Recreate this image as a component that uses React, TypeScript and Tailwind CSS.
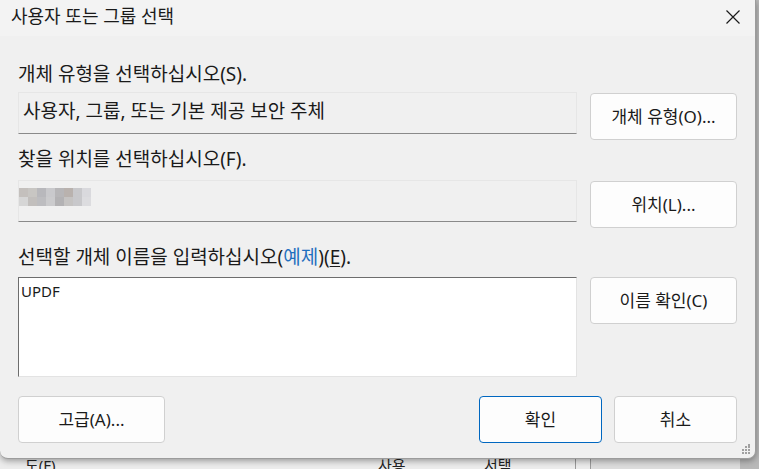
import React from 'react';

const font = { fontFamily: '"Noto Sans", "Noto Sans CJK KR", sans-serif' };

function DlgButton({ children, primary = false, className = '' }: { children: React.ReactNode; primary?: boolean; className?: string }) {
    return (
        <button
            className={`h-[47px] shrink-0 rounded-[4px] bg-[#fdfdfd] text-[17px] text-[#1a1a1a] flex items-center justify-center ${primary ? 'border border-[#0067c0]' : 'border border-[#d0d0d0]'} ${className}`}
        >
            {children}
        </button>
    );
}

function App() {
    return (
        <div className="w-[759px] h-[469px] bg-[#b9b9b9] overflow-hidden relative" style={font}>
            {/* 뒤쪽 창 (잘린 부분) */}
            <div className="absolute left-0 top-[452px] w-[740px] h-[17px] bg-[#ececec] text-[15px] text-[#222] leading-none">
                <span className="absolute left-[25px] top-[6px]">도(F)</span>
                <span className="absolute left-[378px] top-[6px]">사용</span>
                <span className="absolute left-[484px] top-[6px]">서택</span>
                <div className="absolute left-[575px] top-0 h-full w-px bg-[#9a9a9a]" />
                <div className="absolute left-[590px] top-0 h-full w-[150px] bg-[#dcdcdc] border-l border-[#9a9a9a]" />
            </div>

            {/* 대화 상자 */}
            <div className="relative w-[756px] h-[459px] bg-[#f0f0f0] rounded-b-[8px] border-r border-b border-[#9c9c9c] shadow-[0_2px_6px_rgba(0,0,0,0.35)] flex flex-col">
                {/* 제목 표시줄 */}
                <div className="h-[36px] shrink-0 bg-[#f3f3f3] flex items-center justify-between pl-[11px] pr-[14px]">
                    <span className="text-[18px] leading-[22px] text-[#1a1a1a] -mt-[5px]">사용자 또는 그룹 선택</span>
                    <svg width="16" height="16" viewBox="0 0 16 16" className="-mt-[3px]">
                        <path d="M1.5 1.5L14.5 14.5M14.5 1.5L1.5 14.5" stroke="#1a1a1a" strokeWidth="1.2" />
                    </svg>
                </div>

                <div className="flex-1 px-[18px] pt-[27px] text-[19px] text-[#1a1a1a]">
                    {/* 개체 유형 */}
                    <div className="h-[22px] leading-[22px]">개체 유형을 선택하십시오(S).</div>
                    <div className="flex items-start mt-[7px] gap-[13px]">
                        <div className="w-[560px] h-[42px] border border-[#e6e6e6] border-b-[#8a8a8a] px-[4px] pt-[6px] leading-[24px]">
                            사용자, 그룹, 또는 기본 제공 보안 주체
                        </div>
                        <DlgButton className="w-[147px] mt-px">개체 유형(O)...</DlgButton>
                    </div>

                    {/* 위치 */}
                    <div className="h-[22px] leading-[22px] mt-[8px]">찾을 위치를 선택하십시오(F).</div>
                    <div className="flex items-start mt-[10px] gap-[13px]">
                        <div className="w-[560px] h-[42px] border border-[#e6e6e6] border-b-[#8a8a8a] pt-[7px]">
                            <div className="grid grid-cols-[repeat(8,9px)] grid-rows-[9px_9px]">
                                {['#c4c0bd', '#c8c6c3', '#b8b8bc', '#c9c9cc', '#b7b6b8', '#b9b2ae', '#c8c8cb', '#d9d9dd',
                                    '#d6d6d6', '#c2bfbd', '#bdbdc0', '#cbcbcd', '#b3b2b4', '#c5c3c2', '#c8c8cb', '#dcdcdf'].map((c, i) => (
                                    <div key={i} style={{ backgroundColor: c }} />
                                ))}
                            </div>
                        </div>
                        <DlgButton className="w-[147px] mt-px">위치(L)...</DlgButton>
                    </div>

                    {/* 개체 이름 */}
                    <div className="h-[22px] leading-[22px] mt-[18px]">
                        선택할 개체 이름을 입력하십시오(<span className="text-[#1f6fbf]">예제</span>)(<span className="underline underline-offset-2">E</span>).
                    </div>
                    <div className="flex items-start mt-[9px] gap-[13px]">
                        <div className="w-[560px] h-[100px] bg-white border border-[#e3e3e3] border-t-[#6d6d6d] border-l-[#6d6d6d] px-[2px] pt-[3px] text-[15px] leading-[20px]">
                            UPDF
                        </div>
                        <DlgButton className="w-[147px]">이름 확인(C)</DlgButton>
                    </div>

                    {/* 하단 버튼 */}
                    <div className="flex mt-[19px]">
                        <DlgButton className="w-[147px]">고급(A)...</DlgButton>
                        <div className="flex-1" />
                        <DlgButton primary className="w-[123px]">확인</DlgButton>
                        <DlgButton className="w-[123px] ml-[12px]">취소</DlgButton>
                    </div>
                </div>

                {/* 크기 조절 그립 */}
                <svg width="10" height="10" viewBox="0 0 10 10" className="absolute right-[4px] bottom-[4px]">
                    {[[8, 0], [8, 3], [5, 3], [8, 6], [5, 6], [2, 6], [8, 9], [5, 9], [2, 9]].map(([x, y], i) => (
                        <rect key={i} x={x - 1} y={y - 1 < 0 ? 0 : y - 1} width="2" height="2" fill="#a0a0a0" />
                    ))}
                </svg>
            </div>
        </div>
    );
}

export default App;
